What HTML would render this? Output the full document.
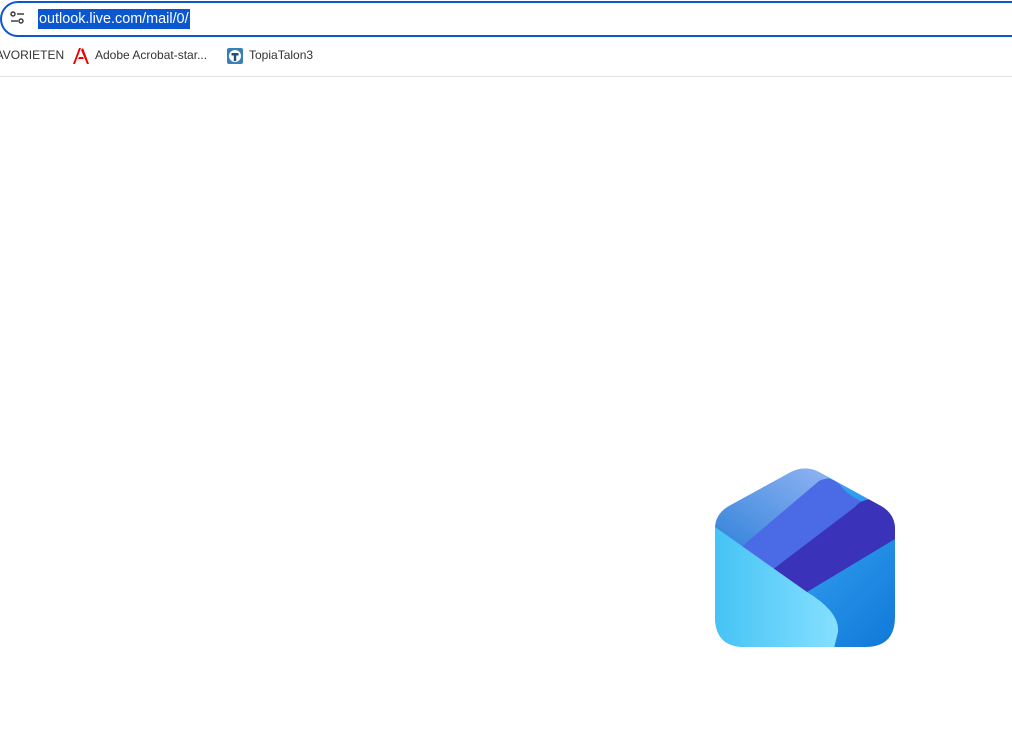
<!DOCTYPE html>
<html><head><style>
html,body{margin:0;padding:0;width:1012px;height:748px;background:#fff;overflow:hidden;font-family:"Liberation Sans",sans-serif}
.bar{position:absolute;left:0;top:1px;width:1060px;height:36px;border:2px solid #0b57d0;border-radius:18px;box-sizing:border-box}
.url{position:absolute;left:38px;top:9px;height:20px;line-height:20px;background:#0b57d0;color:#fff;font-size:14.4px;padding:0 1px}
.bm{position:absolute;top:48px;font-size:12px;color:#333}
.sep{position:absolute;left:0;top:76px;width:1012px;height:1px;background:#e3e3e3}
</style></head><body>
<div class="bar"></div>
<svg style="position:absolute;left:10px;top:11px" width="16" height="14" viewBox="0 0 16 14"><circle cx="3" cy="3" r="2" fill="none" stroke="#333" stroke-width="1.4"/><line x1="7" y1="3" x2="14" y2="3" stroke="#333" stroke-width="1.4"/><circle cx="11" cy="10" r="2" fill="none" stroke="#333" stroke-width="1.4"/><line x1="1" y1="10" x2="8" y2="10" stroke="#333" stroke-width="1.4"/></svg>
<div class="url">outlook.live.com/mail/0/</div>
<div class="bm" style="left:-11px">FAVORIETEN</div>
<svg style="position:absolute;left:73px;top:48px" width="16" height="16" viewBox="0 0 16 16"><path d="M0 16 L6 0 L8 0 L2 16Z M10 0 L16 16 L14 16 L8 2Z M5 11 L11 11 L10 9 L6 9Z" fill="#e00"/></svg>
<div class="bm" style="left:95px">Adobe Acrobat-star...</div>
<svg style="position:absolute;left:227px;top:48px" width="16" height="16" viewBox="0 0 16 16"><rect width="16" height="16" rx="2" fill="#3a7fb8"/><circle cx="8" cy="8" r="6" fill="#fff"/><path d="M4.5 5h7v2.5h-2.3V13H6.8V7.5H4.5Z" fill="#1a4f80"/></svg>
<div class="bm" style="left:249px">TopiaTalon3</div>
<div class="sep"></div>
<svg style="position:absolute;left:715px;top:467px" width="180" height="180" viewBox="0 0 180 180">
<defs>
<clipPath id="env"><path d="M0,62 Q0,47 14,39 L76,5 Q90,-2 104,5 L166,39 Q180,47 180,62 L180,150 Q180,180 150,180 L30,180 Q0,180 0,150 Z"/></clipPath>
<linearGradient id="g1" x1="0" y1="1" x2="1" y2="0"><stop offset="0" stop-color="#2a7fd8"/><stop offset="1" stop-color="#9ab8f5"/></linearGradient>
<linearGradient id="g2" x1="0" y1="0" x2="1" y2="1"><stop offset="0" stop-color="#c09af5"/><stop offset="0.3" stop-color="#3aa8f5"/><stop offset="1" stop-color="#1078d8"/></linearGradient>
<linearGradient id="g3" x1="0" y1="0" x2="1" y2="0"><stop offset="0" stop-color="#45c3f5"/><stop offset="1" stop-color="#85e0ff"/></linearGradient>
</defs>
<g clip-path="url(#env)">
<rect width="180" height="180" fill="url(#g2)"/>
<polygon points="-20,60 90,-10 120,5 25,81" fill="url(#g1)"/>
<path d="M25,81 L104,14 Q115,8 125,18 Q132,28 148,35 L57,103 Z" fill="#4a6ae6"/>
<path d="M57,103 L140,40 Q146,32 160,32 L200,32 L200,60 L92,125 Z" fill="#3a32b8"/>
<path d="M0,60 L92,125 Q125,145 123,165 L118,185 L0,185 Z" fill="url(#g3)"/>
</g>
</svg>
</body></html>
